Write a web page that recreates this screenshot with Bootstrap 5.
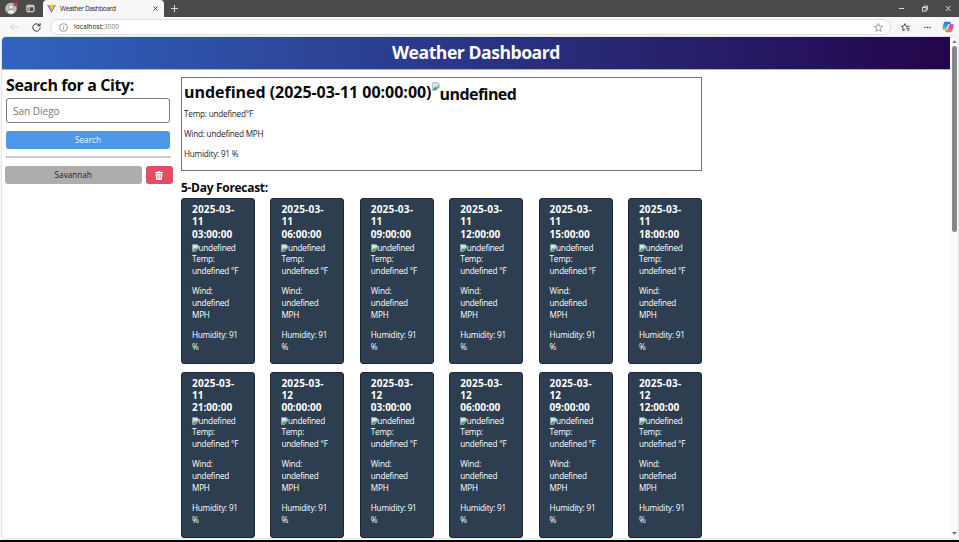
<!DOCTYPE html>
<html lang="en">
<head>
<meta charset="utf-8">
<title>Weather Dashboard</title>
<link href="https://cdn.jsdelivr.net/npm/bootstrap@5.3.0/dist/css/bootstrap.min.css" rel="stylesheet">
<style>
html{font-size:8px}
body{height:542px;overflow:hidden;font:400 8.2px/12px "Open Sans","Noto Sans",sans-serif;letter-spacing:-.22px;color:#212529;background:#f7f7f7}
h1,h2,h3,h4{margin:0;font-weight:700;white-space:nowrap;color:#0a0a0a}
svg{display:block;flex:none}
.tabs-bar{height:17px;background:#4b4a48;flex:none}
.tab-now{width:121px;height:17px;margin-left:8px;background:#f7f7f7;border-radius:4px 4px 0 0;font-size:6.5px;letter-spacing:-.32px;color:#222}
.tools-bar{height:20px;background:#f7f7f7;flex:none}
.address{width:841px;height:16px;margin-left:9px;background:#fff;border:1px solid #dedede;border-radius:8px;font-size:6.8px;letter-spacing:-.05px;color:#222}
.viewport{height:501px;margin:0 1px 0 2px;background:#fff;border-radius:4px;overflow:hidden;flex:none;box-shadow:0 0 0 1px #e4e4e6}
.page{width:948px}
.hero{height:33px;background:linear-gradient(90deg,#3164bf,#23054a);border-bottom:1px solid #aab2d8}
.hero h1{font-size:17.6px;line-height:30px;color:#fff;letter-spacing:-.47px}
.side{width:175px;padding:5px 0 0 4px}
.side h2{font-size:16px;line-height:20px;letter-spacing:-.4px}
.field{width:164px;height:25px;margin-top:3px;padding:0 6px;border:1px solid #77777c;border-radius:3px;font-size:10px;letter-spacing:0;color:#75787c}
.go{width:164px;height:18px;margin-top:8px;padding:0;background:#4f98e8;color:#e8f3ff;border:0;border-radius:3px;font-size:8.2px;line-height:18px}
.rule{width:165px;height:2px;margin:7px 0 8px;background:#cbccd0}
.city{width:136.500px;height:18px;margin-left:-1px;padding:0;background:#adadad;color:#222;border:0;border-radius:3px;font-size:8.2px;line-height:18px}
.del{width:27px;height:18px;margin-left:4px;padding:0;background:#e54b65;border:0;border-radius:3px}
.content-col{width:521px;margin-left:4px;padding-top:7px}
.today{height:94px;border:1px solid #747476;padding:4px 2px}
.today h2{font-size:16px;line-height:20px;letter-spacing:-.03px}
.today .now-alt{padding-top:2px;margin-left:-1px;letter-spacing:-.55px}
.today p{margin:0 0 8px}
.today p:first-of-type{margin-top:4px}
.fc-title{font-size:12px;line-height:14px;margin:10px 0 3px;letter-spacing:-.3px}
.fc-grid{display:grid;grid-template-columns:repeat(6,74px);column-gap:15.4px;row-gap:7.600px}
.fc{height:166px;background:#2d3e50;border:1px solid #1c2838;border-radius:3px;color:#fff;padding:4px 10px;white-space:nowrap}
.fc h4{font-size:10px;line-height:12.3px;color:#fff;letter-spacing:.02px;margin-bottom:2px}
.fc .stamp{letter-spacing:.2px}
.fc p{margin:0 0 8px}
.alt{height:11px}
.alt span{margin-left:-1.500px}
.scroller{width:8px;background:#fafafa}
.thumb{width:5px;height:186px;background:#858788;border-radius:3px}
.taskline{height:2px;margin-top:auto;background:#000}
</style>
<script src="https://cdn.jsdelivr.net/npm/bootstrap@5.3.0/dist/js/bootstrap.bundle.min.js"></script>
</head>
<body class="d-flex flex-column">
<div class="tabs-bar d-flex align-items-center">
  <svg width="13" height="13" viewBox="0 0 13 13" style="margin-left:5px"><circle cx="6" cy="6.5" r="5.8" fill="#c5c2be"/><circle cx="6" cy="5" r="2.3" fill="#f1efed" stroke="#77736f" stroke-width=".6"/><path d="M2.2 10.5c.3-4 7.300-4 7.600 0a5 5 0 0 1-7.600 0z" fill="#f1efed" stroke="#77736f" stroke-width=".6"/><circle cx="10.600" cy="2.600" r="2" fill="#d83b45"/></svg>
  <svg width="9" height="9" viewBox="0 0 9 9" style="margin-left:8px" fill="none" stroke="#eee"><rect x=".8" y="1.200" width="7.200" height="6.600" rx="1"/><path d="M.8 2.700h7.200M3 3v4.500"/></svg>
  <div class="tab-now d-flex align-items-center">
    <svg width="9" height="9" viewBox="0 0 9 9" style="margin-left:4px"><defs><linearGradient id="v" x2="1" y2="1"><stop stop-color="#5b8cf5"/><stop offset="1" stop-color="#b044ee"/></linearGradient></defs><path d="M0 .8 4.500 2 9 .8 4.500 9z" fill="url(#v)"/><path d="M3 .8 6.600.3 6 2.700l1 .1L4.200 7.500l.1-3.200-1.500.2z" fill="#ffc928"/></svg>
    <span class="text-nowrap" style="margin-left:4px">Weather Dashboard</span>
    <svg class="ms-auto" width="5" height="5" viewBox="0 0 5 5" style="margin-right:6px" stroke="#222" stroke-width=".8"><path d="m.4.4 4.200 4.200m0-4.200L.4 4.600"/></svg>
  </div>
  <svg width="7" height="7" viewBox="0 0 7 7" style="margin-left:7px" stroke="#eee" stroke-width=".9"><path d="M3.500 0v7M0 3.500h7"/></svg>
  <svg class="ms-auto" width="52" height="7" viewBox="0 0 52 7" style="margin-right:8px" fill="none" stroke="#e8e8e8" stroke-width=".9"><path d="M0 3.500h5M47 1l4.500 5M51.500 1 47 6"/><rect x="23.500" y="2.500" width="3.600" height="3.600"/><path d="M25 2.300V1h3.500v3.700h-1.300"/></svg>
</div>
<div class="tools-bar d-flex align-items-center">
  <svg width="9" height="8" viewBox="0 0 9 8" style="margin-left:10px" fill="none" stroke="#cfcfcf" stroke-width=".9"><path d="M8.500 4H.6m3.500-3.500L.6 4l3.500 3.500"/></svg>
  <svg width="9" height="9" viewBox="0 0 9 9" style="margin-left:13px" fill="none" stroke="#333" stroke-width="1"><path d="M8.200 4.600A3.700 3.700 0 1 1 7 1.800L8 2.700M8.100.2v2.600H5.500"/></svg>
  <div class="address d-flex align-items-center">
    <svg width="9" height="9" viewBox="0 0 9 9" style="margin-left:8px" fill="none" stroke="#777" stroke-width=".7"><circle cx="4.500" cy="4.500" r="3.900"/><path d="M4.500 4v2.500M4.500 2.300v.9"/></svg>
    <span style="margin-left:6px">localhost:<span style="color:#888">3000</span></span>
    <svg class="ms-auto" width="9" height="9" viewBox="0 0 9 9" style="margin-right:7px" fill="none" stroke="#777" stroke-width=".7"><path d="m4.500.5 1.200 2.600 2.900.4-2.100 2 .5 2.900-2.500-1.400L2 8.400l.5-2.900-2.100-2 2.900-.4z"/></svg>
  </div>
  <svg width="9" height="9" viewBox="0 0 9 9" style="margin-left:10px" fill="none" stroke="#333" stroke-width=".9"><path d="M4.800 2.800 3.800.7 2.800 2.900l-2.400.4 1.700 1.700-.4 2.700 2.500-1.200M5 3.200h3.500M5 5.200h3.500M6 7.100h2.500"/></svg>
  <svg width="7" height="3" viewBox="0 0 7 3" style="margin-left:14px" fill="#444"><circle cx="1" cy="1.500" r=".8"/><circle cx="3.500" cy="1.500" r=".8"/><circle cx="6" cy="1.500" r=".8"/></svg>
  <svg width="12" height="12" viewBox="0 0 12 12" style="margin-left:11px"><defs><linearGradient id="ca" x2="0" y2="1"><stop stop-color="#1672dc"/><stop offset=".55" stop-color="#28b7c9"/><stop offset="1" stop-color="#f5c63b"/></linearGradient><linearGradient id="cb" x2="0" y2="1"><stop stop-color="#9f58ed"/><stop offset=".5" stop-color="#ea4e99"/><stop offset="1" stop-color="#f5843b"/></linearGradient></defs><path d="M3.500.8h3.700c1.200 0 1.400 1 1.700 2.200H7.200c-1.300 0-1.600 2-2.200 4.200-.3 1.300-.9 1.900-2 1.900H1.600C0 9.100.2 7.400.8 5.300 1.500 2.800 1.900.8 3.500.8z" fill="url(#ca)"/><path d="M8.500 11.200H4.800c-1.200 0-1.400-1-1.700-2.200h1.700c1.300 0 1.600-2 2.200-4.200.3-1.300.9-1.900 2-1.900h1.400c1.600 0 1.400 1.700.8 3.800-.7 2.500-1.100 4.500-2.700 4.500z" fill="url(#cb)"/></svg>
</div>
<div class="viewport d-flex">
  <div class="page">
    <header class="hero text-center"><h1>Weather Dashboard</h1></header>
    <div class="d-flex">
      <aside class="side">
        <h2>Search for a City:</h2>
        <div class="field d-flex align-items-center">San Diego</div>
        <button class="btn go d-block">Search</button>
        <div class="rule"></div>
        <div class="d-flex"><button class="btn city flex-shrink-0">Savannah</button>
        <button class="btn del d-flex flex-shrink-0 align-items-center justify-content-center" aria-label="Delete"><svg width="8" height="9" viewBox="0 0 8 9"><path d="M0 1h2.500l.4-.8h2.200l.4.800H8v1H0zM.6 2.500h6.800L7 8.200c0 .5-.4.8-.8.8H1.800c-.4 0-.8-.3-.8-.8z" fill="#fff"/><path d="M2.500 3.500v4.300M4 3.500v4.300M5.500 3.500v4.300" stroke="#e54b65" stroke-width=".5"/></svg></button></div>
      </aside>
      <main class="content-col">
        <section class="today">
          <h2 class="d-flex"><span>undefined (2025-03-11 00:00:00)</span><svg width="9" height="9" viewBox="0 0 9 9"><use href="#broken"/></svg><span class="now-alt">undefined</span></h2>
          <p>Temp: undefined°F</p><p>Wind: undefined MPH</p><p>Humidity: 91 %</p>
        </section>
        <h3 class="fc-title">5-Day Forecast:</h3>
        <div class="fc-grid" id="forecast"></div>
      </main>
    </div>
  </div>
  <div class="scroller d-flex flex-column align-items-center">
    <svg width="5" height="3" viewBox="0 0 5 3" style="margin:3px 0"><path d="M0 3 2.500 0 5 3z" fill="#858788"/></svg>
    <div class="thumb"></div>
    <svg class="mt-auto" width="5" height="3" viewBox="0 0 5 3" style="margin-bottom:3px"><path d="M0 0 2.500 3 5 0z" fill="#777"/></svg>
  </div>
</div>
<div class="taskline"></div>
<svg width="0" height="0" class="position-absolute"><symbol id="broken" viewBox="0 0 9 9"><path d="M.5.500h5l2 2v2L4 8.500H.5z" fill="#c9dcf5" stroke="#a3a9b0" stroke-width=".6"/><path d="M1 7.500 3 4.500l1.500 1.200L7 3.500V5L4 8H1z" fill="#4fa64b"/><path d="M5.500.5v2h2z" fill="#fff" stroke="#a3a9b0" stroke-width=".4"/><path d="m1.500 3.200.8-1 1.500.2.300.8z" fill="#fff"/></symbol></svg>
<script>
const slots = [['11','03'],['11','06'],['11','09'],['11','12'],['11','15'],['11','18'],['11','21'],['12','00'],['12','03'],['12','06'],['12','09'],['12','12']];
document.getElementById('forecast').innerHTML = slots.map(([day, hour]) => `
  <article class="fc"><h4><span class="stamp">2025-03-</span><br>${day}<br>${hour}:00:00</h4>
  <div class="alt d-flex"><svg width="8" height="8" viewBox="0 0 9 9" style="margin-top:2px"><use href="#broken"/></svg><span>undefined</span></div>
  <p>Temp:<br>undefined °F</p><p>Wind:<br>undefined<br>MPH</p><p>Humidity: 91<br>%</p></article>`).join('');
</script>
</body>
</html>
